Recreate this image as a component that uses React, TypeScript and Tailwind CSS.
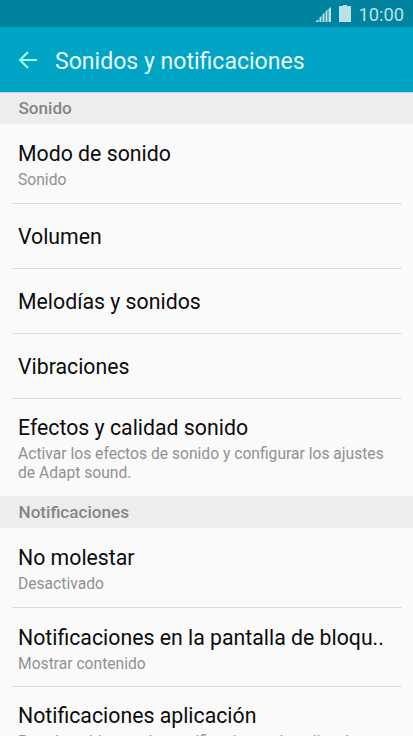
interface Item {
    title: string;
    summary?: string;
    height: string;
}

interface Section {
    title: string;
    items: Item[];
}

const SECTIONS: Section[] = [
    {
        title: 'Sonido',
        items: [
            { title: 'Modo de sonido', summary: 'Sonido', height: 'h-20' },
            { title: 'Volumen', height: 'h-[65px]' },
            { title: 'Melodías y sonidos', height: 'h-[65px]' },
            { title: 'Vibraciones', height: 'h-[65px]' },
            {
                title: 'Efectos y calidad sonido',
                summary: 'Activar los efectos de sonido y configurar los ajustes de Adapt sound.',
                height: 'h-[97px] pb-0.5',
            },
        ],
    },
    {
        title: 'Notificaciones',
        items: [
            { title: 'No molestar', summary: 'Desactivado', height: 'h-20' },
            { title: 'Notificaciones en la pantalla de bloqu..', summary: 'Mostrar contenido', height: 'h-[79px]' },
            {
                title: 'Notificaciones aplicación',
                summary: 'Permite o bloquea las notificaciones de aplicaciones',
                height: 'h-[77px]',
            },
        ],
    },
];

const StatusBar = () => (
    <div className="flex h-[27px] items-center justify-end bg-[#00839e] pr-[9px] text-[#b9e1e7]">
        <svg className="mt-0.5" width="15" height="15" viewBox="0 0 15 15" fill="currentColor">
            <path d="M0 15v-1l2.5-1.5V15zM3.5 15v-4.5l2-1.5v6zM6.5 15V7.5l2-2V15zM9.5 15V4.5l2-2V15zM12.5 15V2L15 0v15z" />
        </svg>
        <svg className="ml-2" width="12" height="17" viewBox="0 0 12 17" fill="currentColor">
            <path d="M4 0h4v1h4v16H0V1h4z" />
        </svg>
        <span className="ml-[7px] mt-0.5 text-[18.3px] leading-6">10:00</span>
    </div>
);

const Row = ({ item, isLast }: { item: Item, isLast: boolean }) => (
    <li className={`ml-3 mr-[11px] flex flex-col justify-center pl-[6.2px] pt-0.5 ${item.height} ${isLast ? '' : 'border-b border-[#dcdcdc]'}`}>
        <span className="origin-left scale-x-[0.967] whitespace-nowrap text-[22px] leading-7 text-[#0c0c0c]">{item.title}</span>
        {item.summary && (
            <span className="mt-0.5 origin-left scale-x-[0.977] text-[16px] leading-[19px] text-[#919191]">{item.summary}</span>
        )}
    </li>
);

function App() {
    return (
        <div className="h-[736px] w-[413px] overflow-hidden bg-[#fafafa] font-[Roboto,sans-serif]">
            <StatusBar />
            <header className="relative flex h-[65px] items-center bg-[#00a5c5] pl-[18px] pt-0.5 shadow-[0_1px_0_#c9d3d5]">
                <svg width="20" height="20" viewBox="0 0 20 20" fill="none" stroke="#a5ffee" strokeWidth="2">
                    <path d="M10 1L2 9l8 8M1.5 9H19" />
                </svg>
                <h1 className="ml-[17px] pt-0.5 text-[23.05px] leading-7 text-[#e9fbfd]">Sonidos y notificaciones</h1>
            </header>
            <main>
                {SECTIONS.map(section => (
                    <section key={section.title}>
                        <h2 className="flex h-8 items-center bg-[#ededed] pl-[18.5px] pt-0.5 text-[17.1px] font-medium text-[#858585]">
                            {section.title}
                        </h2>
                        <ul>
                            {section.items.map((item, i) => (
                                <Row key={item.title} item={item} isLast={i === section.items.length - 1} />
                            ))}
                        </ul>
                    </section>
                ))}
            </main>
        </div>
    );
}

export default App;
